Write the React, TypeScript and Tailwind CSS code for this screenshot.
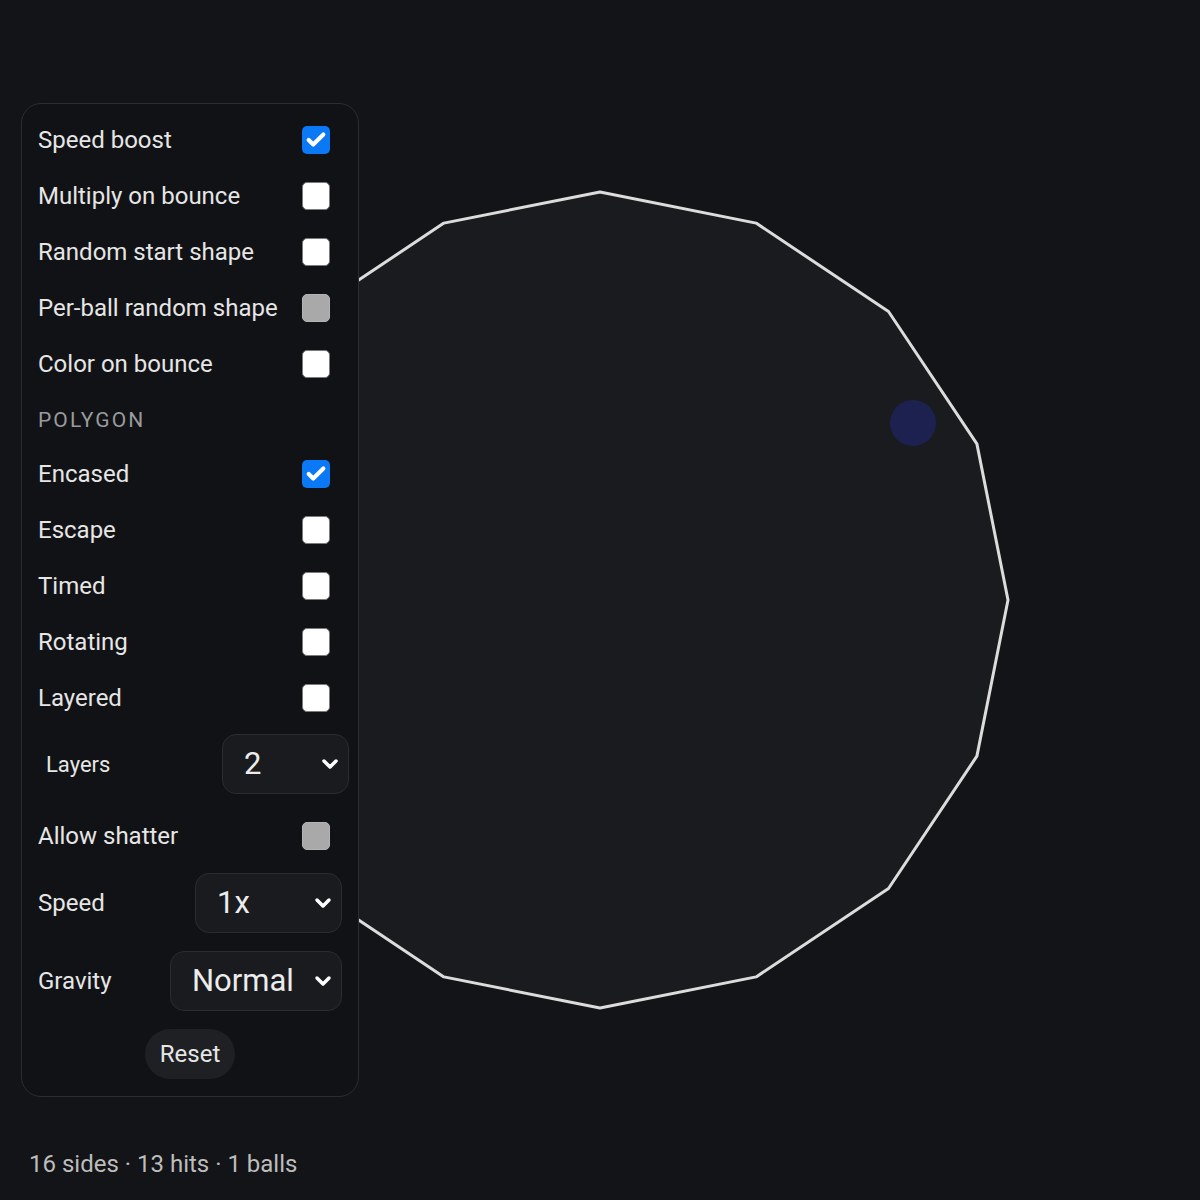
import React, { useState } from 'react';
import { ChevronDown, Check } from 'lucide-react';

const SIDES = 16;
const CX = 600;
const CY = 600;
const R = 408;

function polygonPoints(sides: number, cx: number, cy: number, r: number) {
  const pts: string[] = [];
  for (let i = 0; i < sides; i++) {
    const a = (i / sides) * Math.PI * 2;
    pts.push(`${(cx + r * Math.sin(a)).toFixed(1)},${(cy - r * Math.cos(a)).toFixed(1)}`);
  }
  return pts.join(' ');
}

type BoxState = 'on' | 'off' | 'disabled';

function Box({ state }: { state: BoxState }) {
  if (state === 'on') {
    return (
      <span className="flex items-center justify-center w-[28px] h-[28px] rounded-[5px] bg-[#0b78f5]">
        <Check className="w-[22px] h-[22px] text-white" strokeWidth={4.5} />
      </span>
    );
  }
  if (state === 'disabled') {
    return <span className="block w-[28px] h-[28px] rounded-[5px] bg-[#a9a9a9] border border-[#b4b4b4]" />;
  }
  return <span className="block w-[28px] h-[28px] rounded-[5px] bg-white border border-[#7a7a7a]" />;
}

function ToggleRow({ label, state, h = 'h-[56px]' }: { label: string; state: BoxState; h?: string }) {
  return (
    <div className={`flex items-center justify-between ${h} pr-[12px]`}>
      <span className="text-[24px] text-[#e6e6e6]">{label}</span>
      <Box state={state} />
    </div>
  );
}

function Select({ value, width }: { value: string; width: string }) {
  return (
    <div className={`flex items-center justify-between h-[60px] ${width} rounded-[14px] bg-[#1a1b1e] border border-[#2b2c30] pl-[21px] pr-[6px]`}>
      <span className="text-[31px] text-[#ececec]">{value}</span>
      <ChevronDown className="w-[24px] h-[24px] text-white" strokeWidth={3.5} />
    </div>
  );
}

export default function App() {
  const [hits] = useState(13);

  return (
    <div className="relative w-full h-[1200px] overflow-hidden bg-[#131417] font-['Roboto',sans-serif]">
      {/* play field */}
      <svg className="absolute inset-0" width="1200" height="1200" viewBox="0 0 1200 1200">
        <polygon
          points={polygonPoints(SIDES, CX, CY, R)}
          fill="#1a1b1e"
          stroke="#dcdcdc"
          strokeWidth="3"
          strokeLinejoin="round"
        />
        <circle cx="913" cy="423" r="23" fill="#1d2150" />
      </svg>

      {/* settings panel */}
      <div className="absolute left-[21px] top-[103px] w-[338px] rounded-[20px] border border-[#2c2d31] bg-[#111215] pl-[16px] pr-[16px] pt-[8px] pb-[17px]">
        <ToggleRow label="Speed boost" state="on" />
        <ToggleRow label="Multiply on bounce" state="off" />
        <ToggleRow label="Random start shape" state="off" />
        <ToggleRow label="Per-ball random shape" state="disabled" />
        <ToggleRow label="Color on bounce" state="off" />

        <div className="flex items-center h-[54px] pt-[4px]">
          <span className="text-[21px] tracking-[0.1em] text-[#9a9a9d]">POLYGON</span>
        </div>

        <ToggleRow label="Encased" state="on" />
        <ToggleRow label="Escape" state="off" />
        <ToggleRow label="Timed" state="off" />
        <ToggleRow label="Rotating" state="off" />
        <ToggleRow label="Layered" state="off" />

        <div className="flex items-center justify-between h-[76px] pl-[8px] mr-[-7px]">
          <span className="text-[22px] text-[#e6e6e6]">Layers</span>
          <Select value="2" width="w-[127px]" />
        </div>

        <ToggleRow label="Allow shatter" state="disabled" h="h-[68px]" />

        <div className="flex items-center justify-between h-[66px]">
          <span className="text-[24px] text-[#e6e6e6]">Speed</span>
          <Select value="1x" width="w-[147px]" />
        </div>

        <div className="flex items-center justify-between h-[60px] mt-[15px]">
          <span className="text-[24px] text-[#e6e6e6]">Gravity</span>
          <Select value="Normal" width="w-[172px]" />
        </div>

        <div className="flex justify-center mt-[18px]">
          <button className="h-[50px] w-[90px] rounded-full bg-[#1f2023] text-[24px] text-[#e6e6e6]">Reset</button>
        </div>
      </div>

      {/* status line */}
      <div className="absolute left-[29px] top-[1146px] text-[24px] text-[#bdbdbd]">
        {SIDES} sides · {hits} hits · 1 balls
      </div>
    </div>
  );
}
